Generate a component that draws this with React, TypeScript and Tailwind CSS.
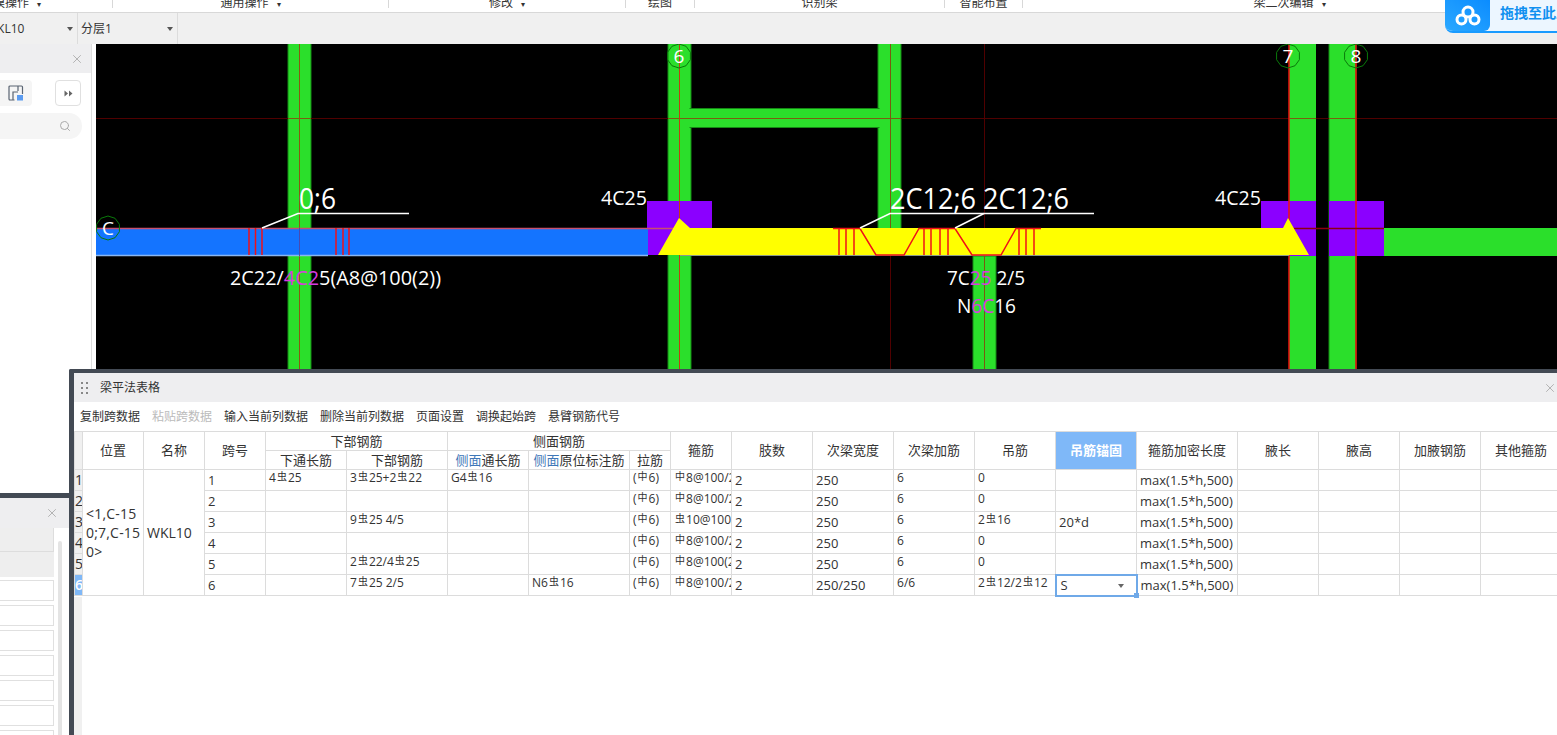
import { Fragment, ReactNode } from 'react';
import { Search, X } from 'lucide-react';

const colWidths = [8, 61, 61, 61, 81, 101, 81, 101, 41, 61, 81, 81, 81, 81, 81, 101, 81, 81, 81, 81];

const toolbarTabs = [
  { label: '建模操作', width: 113, caret: true, shift: '-translate-x-[45px]' },
  { label: '通用操作', width: 276, caret: true, shift: '' },
  { label: '修改', width: 237, caret: true, shift: '' },
  { label: '绘图', width: 69, caret: false, shift: '' },
  { label: '识别梁', width: 250, caret: false, shift: '' },
  { label: '智能布置', width: 78, caret: false, shift: '' },
  { label: '梁二次编辑', width: 534, caret: true, shift: '' },
];

const actions = ['复制跨数据', '粘贴跨数据', '输入当前列数据', '删除当前列数据', '页面设置', '调换起始跨', '悬臂钢筋代号'];

const rows = [
  { lc: '4虫25', lb: '3虫25+2虫22', sc: 'G4虫16', so: '', gu: '中8@100/200(2)', w: '250', add: '6', hang: '0', anc: '' },
  { lc: '', lb: '', sc: '', so: '', gu: '中8@100/200(2)', w: '250', add: '6', hang: '0', anc: '' },
  { lc: '', lb: '9虫25 4/5', sc: '', so: '', gu: '虫10@100/200(2)', w: '250', add: '6', hang: '2虫16', anc: '20*d' },
  { lc: '', lb: '', sc: '', so: '', gu: '中8@100/200(2)', w: '250', add: '6', hang: '0', anc: '' },
  { lc: '', lb: '2虫22/4虫25', sc: '', so: '', gu: '中8@100(2)', w: '250', add: '6', hang: '0', anc: '' },
  { lc: '', lb: '7虫25 2/5', sc: '', so: 'N6虫16', gu: '中8@100/200(2)', w: '250/250', add: '6/6', hang: '2虫12/2虫12', anc: 'S' },
];

// rebar grade marks are drawn smaller and raised, like the CAD font does
function Rebar({ text }: { text: string }) {
  const parts = text.split(/([虫中])/);
  return (
    <>
      {parts.map((part, i) =>
        part === '虫' || part === '中' ? (
          <span key={i} className="relative -top-[2px] mx-px text-[10px]">
            {part}
          </span>
        ) : (
          <Fragment key={i}>{part}</Fragment>
        ),
      )}
    </>
  );
}

function Th({ children, rowSpan, colSpan, className = '' }: { children: ReactNode; rowSpan?: number; colSpan?: number; className?: string }) {
  return (
    <th rowSpan={rowSpan} colSpan={colSpan} className={`overflow-hidden whitespace-nowrap border border-[#dcdcdc] p-0 text-center align-middle text-[13px] font-normal leading-[17px] text-[#333] ${className}`}>
      {children}
    </th>
  );
}

function Td({ children, small = false, className = '' }: { children?: ReactNode; small?: boolean; className?: string }) {
  return (
    <td className={`h-[21px] overflow-hidden whitespace-nowrap border border-[#dcdcdc] p-0 pl-[3px] text-[#333] ${small ? 'align-top text-[12px] leading-[15px]' : 'pt-[1px] align-top text-[13px] leading-[18px]'} ${className}`}>
      {children}
    </td>
  );
}

function GridMark({ x, y, label }: { x: number; y: number; label: string }) {
  const points = Array.from({ length: 10 }, (_, i) => {
    const a = (i * Math.PI) / 5;
    return `${x + 12 * Math.sin(a)},${y + 12 * Math.cos(a)}`;
  }).join(' ');
  return (
    <g>
      <polygon points={points} fill="none" stroke="#0a7a0a" strokeWidth="1" />
      <text x={x} y={y + 7} textAnchor="middle" fontSize="19" fill="#fff">
        {label}
      </text>
    </g>
  );
}

function Drawing() {
  const magenta = '#d83be0';
  return (
    <svg viewBox="96 44 1461 325" className="h-[325px] w-[1461px] bg-black font-['Open_Sans',sans-serif]">
      {/* columns and beams */}
      <g fill="#2bdf2b" stroke="#148a14" strokeWidth="1">
        <rect x="288" y="40" width="23" height="335" />
        <rect x="668" y="40" width="23" height="335" />
        <rect x="878" y="40" width="23" height="200" />
        <rect x="973" y="256" width="23" height="120" />
        <rect x="690" y="108.5" width="189" height="19" />
        <rect x="1289" y="40" width="27" height="335" stroke="none" />
        <rect x="1329" y="40" width="27" height="335" />
        <rect x="1384" y="228" width="175" height="28" stroke="none" />
      </g>
      {/* cover the column edges where the cross beam joins them */}
      <rect x="669" y="109" width="23" height="18" fill="#2bdf2b" />
      <rect x="877" y="109" width="23" height="18" fill="#2bdf2b" />

      {/* supports */}
      <g fill="#8b00ff">
        <rect x="647" y="201" width="65" height="27" />
        <rect x="647" y="228" width="33" height="27" />
        <rect x="1261" y="201" width="55" height="27" />
        <rect x="1289" y="228" width="27" height="28" />
        <rect x="1329" y="201" width="55" height="55" />
      </g>

      {/* axis lines */}
      <g strokeWidth="1">
        <line x1="96" y1="118.5" x2="1557" y2="118.5" stroke="#500000" />
        <line x1="668" y1="118.5" x2="901" y2="118.5" stroke="#7a6010" />
        <line x1="288" y1="118.5" x2="311" y2="118.5" stroke="#7a6010" />
        <line x1="1289" y1="118.5" x2="1316" y2="118.5" stroke="#7a6010" />
        <line x1="1329" y1="118.5" x2="1356" y2="118.5" stroke="#7a6010" />
        <line x1="299.5" y1="44" x2="299.5" y2="369" stroke="#8a5a10" />
        <line x1="890.5" y1="44" x2="890.5" y2="256" stroke="#7a5a10" />
        <line x1="890.5" y1="256" x2="890.5" y2="369" stroke="#500000" />
        <line x1="984.5" y1="44" x2="984.5" y2="256" stroke="#500000" />
        <line x1="984.5" y1="256" x2="984.5" y2="369" stroke="#7a5a10" />
        <line x1="679.5" y1="44" x2="679.5" y2="369" stroke="#c04010" />
        <line x1="1289" y1="44" x2="1289" y2="369" stroke="#f01010" strokeWidth="1.5" />
        <line x1="1356" y1="44" x2="1356" y2="369" stroke="#f01010" strokeWidth="1.5" />
        <line x1="1289" y1="228.5" x2="1384" y2="228.5" stroke="#8a0010" strokeWidth="1.5" />
      </g>

      {/* blue span */}
      <rect x="96" y="228" width="552" height="28" fill="#1474ff" />
      <line x1="96" y1="228.5" x2="680" y2="228.5" stroke="#c8506e" strokeWidth="1.5" />
      <line x1="96" y1="255.5" x2="648" y2="255.5" stroke="#8ab6f0" strokeWidth="1.5" />
      <line x1="299.5" y1="228" x2="299.5" y2="256" stroke="#4a4ab0" />

      {/* yellow span with arrow ends */}
      <polygon points="679,218 690,228 1283,228 1288,218 1309,255 1289,255 680,255 658,255" fill="#ffff00" />
      <line x1="680" y1="255.5" x2="1289" y2="255.5" stroke="#8a9a8a" strokeWidth="1" />

      {/* stirrups */}
      <g stroke="#f01018" strokeWidth="1.5" fill="none">
        {[249, 255.5, 262, 336, 343, 349, 839, 846, 854, 924, 931, 940, 948, 1019, 1026, 1034].map((x) => (
          <line key={x} x1={x} y1="228" x2={x} y2="255" />
        ))}
        <polyline points="833,228.5 860,228.5 876,255 904,255 919,228.5 955,228.5 972,255 1001,255 1016,228.5 1041,228.5" />
      </g>

      {/* leaders */}
      <g stroke="#fff" strokeWidth="1.5" fill="none">
        <polyline points="262,228 298,213.5 409,213.5" />
        <polyline points="860,228 890,213.5 1094,213.5" />
        <line x1="955" y1="228" x2="984" y2="213.5" />
      </g>

      {/* annotations */}
      <g fill="#fff">
        <text x="299" y="209" fontSize="30" textLength="37" lengthAdjust="spacingAndGlyphs">0;6</text>
        <text x="890" y="209" fontSize="30" textLength="179" lengthAdjust="spacingAndGlyphs">2C12;6 2C12;6</text>
        <text x="601" y="205" fontSize="20" textLength="46" lengthAdjust="spacingAndGlyphs">4C25</text>
        <text x="1215" y="205" fontSize="20" textLength="46" lengthAdjust="spacingAndGlyphs">4C25</text>
        <text x="230" y="285" fontSize="20" textLength="211" lengthAdjust="spacingAndGlyphs">
          2C22/<tspan fill={magenta}>4C2</tspan>5(A8@100(2))
        </text>
        <text x="947" y="285" fontSize="20" textLength="78" lengthAdjust="spacingAndGlyphs">
          7C<tspan fill={magenta}>25</tspan> 2/5
        </text>
        <text x="957" y="313" fontSize="20" textLength="59" lengthAdjust="spacingAndGlyphs">
          N<tspan fill={magenta}>6C</tspan>16
        </text>
      </g>

      <GridMark x={108} y={228} label="C" />
      <GridMark x={679} y={56} label="6" />
      <GridMark x={1288} y={56} label="7" />
      <GridMark x={1356} y={56} label="8" />
    </svg>
  );
}

function TableDialog() {
  return (
    <div className="absolute left-[69px] top-[369px] flex h-[366px] w-[1488px] flex-col overflow-hidden rounded-tl-[2px] border-l-[5px] border-t-[4px] border-[#434a54] bg-white">
      <div className="flex h-[29px] shrink-0 items-center bg-[#eeeef0] pl-[7px]">
        <div className="grid grid-cols-2 gap-x-[3px] gap-y-[3px]">
          {[0, 1, 2, 3, 4, 5].map((i) => (
            <span key={i} className="h-[2px] w-[2px] bg-[#888]" />
          ))}
        </div>
        <span className="ml-[12px] text-[12px] text-[#333]">梁平法表格</span>
        <X size={14} strokeWidth={1.5} className="ml-auto text-[#aaa]" />
      </div>
      <div className="flex h-[29px] shrink-0 items-center gap-[12px] pl-[6px] text-[12px] text-[#333]">
        {actions.map((a) => (
          <span key={a} className={a === '粘贴跨数据' ? 'text-[#bbb]' : ''}>
            {a}
          </span>
        ))}
      </div>
      <table className="w-[1487px] shrink-0 table-fixed border-collapse">
        <colgroup>
          {colWidths.map((w, i) => (
            <col key={i} style={{ width: w }} />
          ))}
        </colgroup>
        <thead>
          <tr className="h-[19px]">
            <Th rowSpan={2} className="bg-[#f0f0f0]">{''}</Th>
            <Th rowSpan={2}>位置</Th>
            <Th rowSpan={2}>名称</Th>
            <Th rowSpan={2}>跨号</Th>
            <Th colSpan={2}>下部钢筋</Th>
            <Th colSpan={3}>侧面钢筋</Th>
            <Th rowSpan={2}>箍筋</Th>
            <Th rowSpan={2}>肢数</Th>
            <Th rowSpan={2}>次梁宽度</Th>
            <Th rowSpan={2}>次梁加筋</Th>
            <Th rowSpan={2}>吊筋</Th>
            <Th rowSpan={2} className="bg-[#7fb8f8] font-semibold !text-white">吊筋锚固</Th>
            <Th rowSpan={2}>箍筋加密长度</Th>
            <Th rowSpan={2}>腋长</Th>
            <Th rowSpan={2}>腋高</Th>
            <Th rowSpan={2}>加腋钢筋</Th>
            <Th rowSpan={2}>其他箍筋</Th>
          </tr>
          <tr className="h-[19px]">
            <Th>下通长筋</Th>
            <Th>下部钢筋</Th>
            <Th><span className="text-[#3f78b8]">侧面</span>通长筋</Th>
            <Th><span className="text-[#3f78b8]">侧面</span>原位标注筋</Th>
            <Th>拉筋</Th>
          </tr>
        </thead>
        <tbody>
          {rows.map((r, i) => (
            <tr key={i}>
              <td className={`h-[21px] overflow-hidden whitespace-nowrap border border-[#dcdcdc] p-0 text-[14px] leading-[18px] ${i === 5 ? 'bg-[#7fb8f8] font-semibold text-white' : 'bg-[#f0f0f0] text-[#333]'}`}>
                {i + 1}
              </td>
              {i === 0 && (
                <>
                  <td rowSpan={6} className="whitespace-nowrap border border-[#dcdcdc] p-0 pl-[3px] align-middle text-[14px] leading-[19px] tracking-[0.2px] text-[#333]">
                    &lt;1,C-15
                    <br />
                    0;7,C-15
                    <br />
                    0&gt;
                  </td>
                  <td rowSpan={6} className="border border-[#dcdcdc] p-0 pl-[3px] align-middle text-[14px] text-[#333]">
                    WKL10
                  </td>
                </>
              )}
              <Td>{i + 1}</Td>
              <Td small><Rebar text={r.lc} /></Td>
              <Td small><Rebar text={r.lb} /></Td>
              <Td small><Rebar text={r.sc} /></Td>
              <Td small><Rebar text={r.so} /></Td>
              <Td small><Rebar text="(中6)" /></Td>
              <Td small><Rebar text={r.gu} /></Td>
              <Td>2</Td>
              <Td>{r.w}</Td>
              <Td small>{r.add}</Td>
              <Td small><Rebar text={r.hang} /></Td>
              {i === 5 ? (
                <td className="relative h-[21px] border-2 border-[#6fa9e8] p-0 pl-[4px] align-top text-[13px] leading-[18px] text-[#333]">
                  S
                  <span className="absolute right-[12px] top-[8px] h-0 w-0 border-x-[3px] border-t-[4px] border-x-transparent border-t-[#666]" />
                  <span className="absolute -bottom-[3px] -right-[3px] h-[5px] w-[5px] bg-[#6fa9e8]" />
                </td>
              ) : (
                <Td>{r.anc}</Td>
              )}
              <Td>max(1.5*h,500)</Td>
              <Td />
              <Td />
              <Td />
              <Td />
            </tr>
          ))}
        </tbody>
      </table>
      <div className="w-[8px] flex-1 bg-[#f0f0f0]" />
    </div>
  );
}

function LowerLeftPanel() {
  return (
    <div className="absolute left-0 top-[493px] flex h-[242px] w-[69px] flex-col overflow-hidden border-t-[5px] border-[#434a54] bg-white">
      <div className="flex h-[30px] shrink-0 items-center justify-end bg-[#eeeef0] pr-[10px]">
        <X size={14} strokeWidth={1.5} className="text-[#aaa]" />
      </div>
      <div className="flex flex-1">
        <div className="flex w-[54px] flex-col">
          <div className="h-[24px] border-b border-r border-[#ddd] bg-[#eee]" />
          <div className="mb-[3px] h-[25px] bg-[#eee]" />
          {[0, 1, 2, 3, 4, 5, 6].map((i) => (
            <div key={i} className="mb-[4px] h-[21px] shrink-0 border border-l-0 border-[#e0e0e0] bg-white" />
          ))}
        </div>
        <div className="ml-[4px] mt-[13px] w-[4px] rounded-[2px] bg-[#e4e4e4]" />
      </div>
    </div>
  );
}

export default function App() {
  return (
    <div className="relative h-[735px] w-[1557px] overflow-hidden bg-white font-['Open_Sans','Noto_Sans_CJK_SC',sans-serif]">
      <div className="flex h-[13px] border-b border-[#d8d8d8] bg-white">
        {toolbarTabs.map((t) => (
          <div key={t.label} className="relative h-[8px] shrink-0 overflow-hidden whitespace-nowrap border-r border-[#d8d8d8] text-center" style={{ width: t.width }}>
            <span className={`relative -top-[11px] inline-block text-[12px] leading-[16px] text-[#333] ${t.shift}`}>
              {t.label}
              {t.caret && <span className="ml-[8px] text-[8px]">▾</span>}
            </span>
          </div>
        ))}
      </div>

      <div className="flex h-[31px] items-center bg-[#f0f0f0] text-[12px] text-[#333]">
        <div className="relative flex h-full w-[78px] items-center overflow-hidden border-r border-[#dcdcdc]">
          <span className="absolute -left-[14px]">WKL10</span>
          <span className="absolute right-[4px] h-0 w-0 border-x-[3px] border-t-[4px] border-x-transparent border-t-[#555]" />
        </div>
        <div className="relative flex h-full w-[100px] items-center border-r border-[#dcdcdc] pl-[3px]">
          分层1
          <span className="absolute right-[4px] h-0 w-0 border-x-[3px] border-t-[4px] border-x-transparent border-t-[#555]" />
        </div>
      </div>

      <div className="flex">
        <div className="w-[96px] shrink-0">
          <div className="w-[92px] border-r border-[#ddd]">
            <div className="flex h-[29px] items-center justify-end bg-[#eeeef0] pr-[7px]">
              <X size={14} strokeWidth={1.5} className="text-[#aaa]" />
            </div>
            <div className="flex h-[340px] flex-col bg-white">
              <div className="mt-[7px] flex h-[26px] items-center justify-between pr-[10px]">
                <div className="flex h-[26px] w-[32px] items-center justify-center rounded-r-[4px] bg-[#f5f5f5]">
                  <svg width="16" height="16" viewBox="0 0 16 16" fill="none">
                    <path d="M6.5 15H2a1 1 0 0 1-1-1V2a1 1 0 0 1 1-1h11.5a1 1 0 0 1 1 1v7" stroke="#5a6472" strokeWidth="1.2" />
                    <path d="M5 15V7h5M10 1v5" stroke="#5a6472" strokeWidth="1.2" />
                    <rect x="9" y="10" width="6" height="5.5" fill="#5b9bf0" />
                  </svg>
                </div>
                <div className="flex h-[26px] w-[26px] items-center justify-center rounded-[4px] border border-[#e0e0e0] bg-white">
                  <svg width="9" height="7" viewBox="0 0 9 7" fill="#666">
                    <path d="M0.5 0.5 4 3.5 0.5 6.5zM5 0.5 8.5 3.5 5 6.5z" />
                  </svg>
                </div>
              </div>
              <div className="mr-[9px] mt-[7px] flex h-[26px] items-center justify-end rounded-r-[13px] bg-[#f5f5f5] pr-[11px]">
                <Search size={12} strokeWidth={2} className="text-[#aaa]" />
              </div>
            </div>
          </div>
        </div>
        <Drawing />
      </div>

      <LowerLeftPanel />
      <TableDialog />

      {/* cloud drive drop badge */}
      <div className="absolute right-0 top-0 flex h-[33px] w-[112px] overflow-hidden rounded-bl-[8px] border-b-2 border-[#1a9bff] bg-[#ecf6ff]">
        <div className="flex w-[45px] shrink-0 items-center justify-center rounded-br-[6px] bg-gradient-to-tr from-[#2aa8ff] to-[#0a8cff]">
          <svg width="26" height="22" viewBox="0 0 26 22" fill="none" stroke="#fff" strokeWidth="3">
            <circle cx="13" cy="7" r="5" />
            <circle cx="6.5" cy="14.5" r="4.5" />
            <circle cx="19.5" cy="14.5" r="4.5" />
          </svg>
        </div>
        <span className="ml-[10px] mt-[3px] whitespace-nowrap text-[14px] font-semibold leading-[20px] text-[#1090f0]">拖拽至此上传</span>
      </div>
    </div>
  );
}
